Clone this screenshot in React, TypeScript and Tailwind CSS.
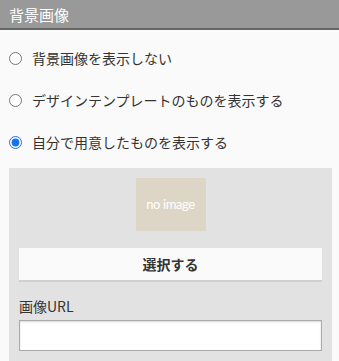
import React, { useState } from 'react';

const options = [
  { id: 'none', label: '背景画像を表示しない' },
  { id: 'template', label: 'デザインテンプレートのものを表示する' },
  { id: 'custom', label: '自分で用意したものを表示する' },
];

const App: React.FC = () => {
  const [selected, setSelected] = useState('custom');
  const [url, setUrl] = useState('');

  return (
    <div
      className="w-[339px] h-[361px] overflow-hidden bg-[#fafafa] text-[#333]"
      style={{ fontFamily: '"Noto Sans CJK JP", "Noto Sans", sans-serif' }}
    >
      {/* Section header */}
      <div className="h-[30px] bg-[#999] border-b-2 border-[#666] pl-[9px] flex items-center">
        <span className="text-[15px] leading-none text-white">背景画像</span>
      </div>

      {/* Radio options */}
      <div className="pt-[7px]">
        {options.map((opt) => (
          <label key={opt.id} className="h-[42px] flex items-center pl-[9px] cursor-pointer">
            <input
              type="radio"
              name="bg"
              checked={selected === opt.id}
              onChange={() => setSelected(opt.id)}
              className="w-[13px] h-[13px] m-0 accent-[#1a73e8]"
            />
            <span className="ml-[10px] text-[14px] leading-none">{opt.label}</span>
          </label>
        ))}
      </div>

      {/* Custom image panel */}
      <div className="mt-[5px] mx-[9px] w-[323px] bg-[#e2e2e2] px-[10px] pt-[10px] pb-[12px]">
        <div className="flex justify-center">
          <div className="w-[70px] h-[53px] bg-[#ddd6c6] flex items-center justify-center">
            <span
              className="text-[13px] text-white tracking-[-0.4px]"
              style={{ fontFamily: 'Lato, "Noto Sans", sans-serif' }}
            >
              no image
            </span>
          </div>
        </div>
        <button className="mt-[17px] w-full h-[34px] bg-[#fafafa] border-b-2 border-[#cfcfcf] text-[14px] font-bold text-[#333] flex items-center justify-center">
          選択する
        </button>
        <div className="mt-[17px] text-[14px] leading-none">画像URL</div>
        <input
          type="text"
          value={url}
          onChange={(e) => setUrl(e.target.value)}
          className="mt-[7px] block w-full h-[31px] bg-white border border-[#aaa] shadow-[inset_0_1px_2px_rgba(0,0,0,0.15)] outline-none px-2 text-[14px]"
        />
      </div>
    </div>
  );
};

export default App;
